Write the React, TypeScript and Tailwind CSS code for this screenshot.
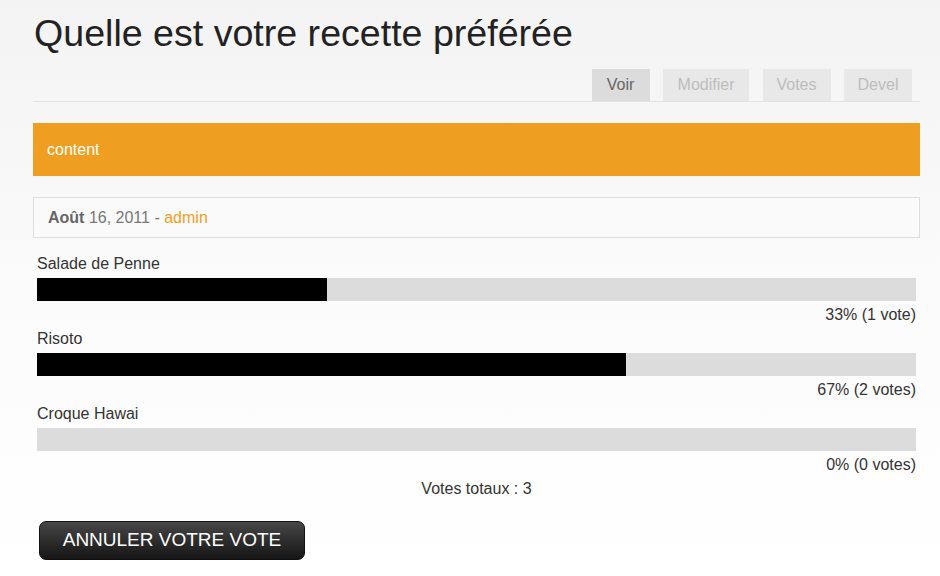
import React from 'react';

const tabs = [
  { label: 'Voir', active: true, w: 'w-[58px]' },
  { label: 'Modifier', active: false, w: 'w-[86px]' },
  { label: 'Votes', active: false, w: 'w-[68px]' },
  { label: 'Devel', active: false, w: 'w-[68px]' },
];

const choices = [
  { label: 'Salade de Penne', pct: 33, votes: '1 vote' },
  { label: 'Risoto', pct: 67, votes: '2 votes' },
  { label: 'Croque Hawai', pct: 0, votes: '0 votes' },
];

export default function App() {
  return (
    <div className="min-h-[576px] w-[940px] bg-gradient-to-b from-[#f3f3f3] via-[#fbfbfb] to-[#ffffff] font-['Liberation_Sans',Arial,sans-serif]">
      <div className="ml-[33px] w-[887px] pt-[10px]">
        <h1 className="pl-[1px] text-[37.6px] leading-[46px] text-[#222]">Quelle est votre recette préférée</h1>

        {/* tabs */}
        <div className="mt-[13px] flex justify-end gap-[13.5px] border-b border-[#e3e3e3] pr-[8px]">
          {tabs.map((t) => (
            <div
              key={t.label}
              className={
                (t.active
                  ? 'bg-[#dcdcdc] text-[#666] '
                  : 'bg-[#e8e8e8] text-[#bdbdbd] ') +
                t.w +
                ' flex h-[32px] items-center justify-center text-[16px]'
              }
            >
              {t.label}
            </div>
          ))}
        </div>

        <div className="mt-[21px] flex h-[53px] items-center bg-[#ee9f22] pl-[14px] text-[16px] text-white">
          content
        </div>

        <div className="mt-[21px] flex h-[41px] items-center border border-[#dedede] bg-[#fafafa] pl-[14px] text-[16px] text-[#777]">
          <span className="font-bold text-[#666]">Août</span>
          <span>&nbsp;16, 2011 - </span>
          <span className="text-[#ee9f22]">&nbsp;admin</span>
        </div>

        {/* poll */}
        <div className="mt-[17px] px-[4px] text-[16px] leading-[18px] text-[#333]">
          {choices.map((c) => (
            <div key={c.label} className="mb-[6px]">
              <div>{c.label}</div>
              <div className="mt-[5px] h-[23px] w-full bg-[#dcdcdc]">
                <div className="h-full bg-black" style={{ width: `${c.pct}%` }} />
              </div>
              <div className="mt-[5px] text-right">
                {c.pct}% ({c.votes})
              </div>
            </div>
          ))}
          <div className="text-center">Votes totaux : 3</div>
        </div>

        <button className="ml-[6px] mt-[23px] flex h-[39px] w-[266px] items-center justify-center rounded-[7px] border border-[#111] bg-gradient-to-b from-[#474747] to-[#161616] text-[19px] text-white">
          ANNULER VOTRE VOTE
        </button>
      </div>
    </div>
  );
}
